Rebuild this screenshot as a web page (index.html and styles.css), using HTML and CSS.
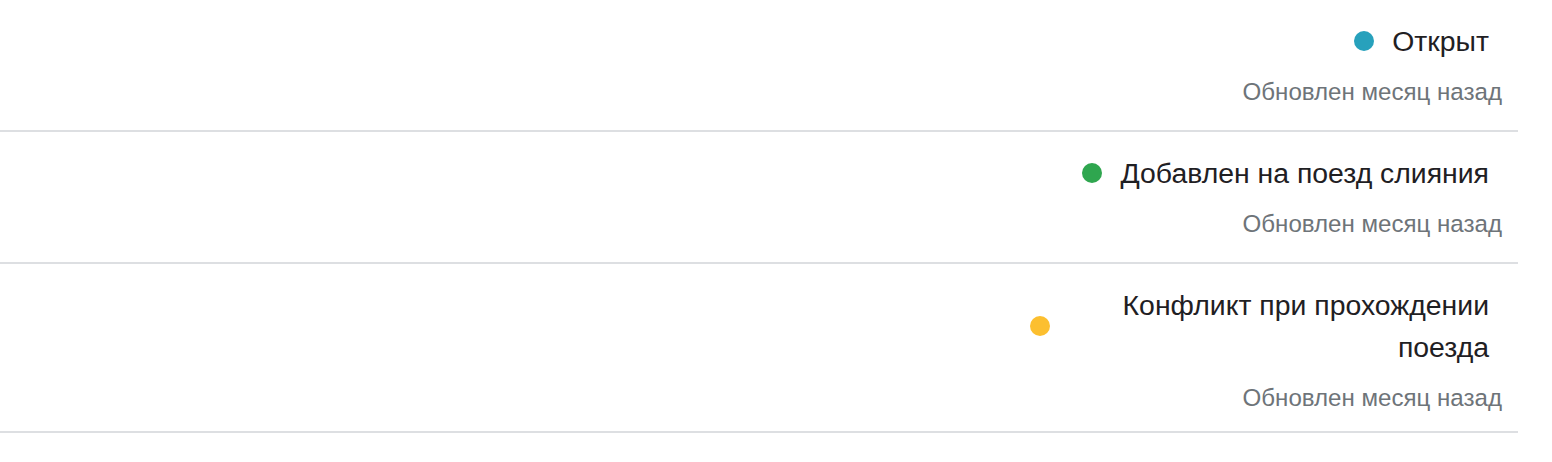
FILE: index.html
```html
<!DOCTYPE html>
<html lang="ru">
<head>
<meta charset="utf-8">
<title>Статусы</title>
<link rel="stylesheet" href="styles.css">
</head>
<body>
<div class="list">
  <div class="row">
    <div class="status">
      <div class="title-line">
        <span class="dot dot-open"></span>
        <span class="title">Открыт</span>
      </div>
      <div class="updated">Обновлен месяц назад</div>
    </div>
  </div>
  <div class="row">
    <div class="status">
      <div class="title-line">
        <span class="dot dot-merged"></span>
        <span class="title">Добавлен на поезд слияния</span>
      </div>
      <div class="updated">Обновлен месяц назад</div>
    </div>
  </div>
  <div class="row">
    <div class="status">
      <div class="title-line">
        <span class="dot dot-conflict"></span>
        <span class="title">Конфликт при прохождении поезда</span>
      </div>
      <div class="updated">Обновлен месяц назад</div>
    </div>
  </div>
</div>
</body>
</html>
```
FILE: styles.css
```css
html, body {
  margin: 0;
  padding: 0;
  background: #ffffff;
}

body {
  font-family: "Liberation Sans", Arial, Helvetica, sans-serif;
  color: #1f2023;
}

.list {
  width: 1518px;
}

.row {
  box-sizing: border-box;
  min-height: 132px;
  display: flex;
  justify-content: flex-end;
  padding: 20px 16px 15px 0;
  border-bottom: 2px solid #dddfe2;
}

.status {
  display: flex;
  flex-direction: column;
  align-items: flex-end;
}

.title-line {
  display: flex;
  align-items: center;
  margin-right: 13px;
}

.dot {
  flex: none;
  width: 20px;
  height: 20px;
  border-radius: 50%;
  margin-right: 18px;
}

.dot-open { background: #27a1bc; }
.dot-merged { background: #2fa64f; }
.dot-conflict { background: #fcbf2f; }

.title {
  max-width: 421px;
  font-size: 28.4px;
  line-height: 42px;
  text-align: right;
}

.updated {
  margin-top: 12px;
  font-size: 24.1px;
  line-height: 36px;
  color: #6e7479;
}
```
